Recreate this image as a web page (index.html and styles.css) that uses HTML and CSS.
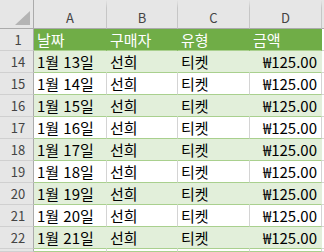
FILE: index.html
```html
<!DOCTYPE html>
<html lang="ko">
<head>
<meta charset="utf-8">
<link rel="stylesheet" href="styles.css">
</head>
<body>
<div class="sheet">
  <div class="ch corner"><span class="tri"></span></div>
  <div class="ch">A</div>
  <div class="ch">B</div>
  <div class="ch">C</div>
  <div class="ch">D</div>
  <div class="ch rest"></div>

  <div class="rh">1</div>
  <div class="c hd">날짜</div>
  <div class="c hd">구매자</div>
  <div class="c hd">유형</div>
  <div class="c hd">금액</div>
  <div class="c out"></div>

  <div class="rh">14</div>
  <div class="c band">1월 13일</div><div class="c band">선희</div><div class="c band">티켓</div><div class="c band num">₩125.00</div><div class="c out"></div>
  <div class="rh">15</div>
  <div class="c">1월 14일</div><div class="c">선희</div><div class="c">티켓</div><div class="c num">₩125.00</div><div class="c out"></div>
  <div class="rh">16</div>
  <div class="c band">1월 15일</div><div class="c band">선희</div><div class="c band">티켓</div><div class="c band num">₩125.00</div><div class="c out"></div>
  <div class="rh">17</div>
  <div class="c">1월 16일</div><div class="c">선희</div><div class="c">티켓</div><div class="c num">₩125.00</div><div class="c out"></div>
  <div class="rh">18</div>
  <div class="c band">1월 17일</div><div class="c band">선희</div><div class="c band">티켓</div><div class="c band num">₩125.00</div><div class="c out"></div>
  <div class="rh">19</div>
  <div class="c">1월 18일</div><div class="c">선희</div><div class="c">티켓</div><div class="c num">₩125.00</div><div class="c out"></div>
  <div class="rh">20</div>
  <div class="c band">1월 19일</div><div class="c band">선희</div><div class="c band">티켓</div><div class="c band num">₩125.00</div><div class="c out"></div>
  <div class="rh">21</div>
  <div class="c">1월 20일</div><div class="c">선희</div><div class="c">티켓</div><div class="c num">₩125.00</div><div class="c out"></div>
  <div class="rh">22</div>
  <div class="c band">1월 21일</div><div class="c band">선희</div><div class="c band">티켓</div><div class="c band num">₩125.00</div><div class="c out"></div>
  <div class="rh"></div>
  <div class="c"></div><div class="c"></div><div class="c"></div><div class="c"></div><div class="c out"></div>
</div>
</body>
</html>
```

FILE: styles.css
```css
* { box-sizing: border-box; }
html, body { margin: 0; padding: 0; background: #ffffff; overflow: hidden; }
body { width: 324px; height: 252px; }
.sheet {
  width: 324px;
  height: 252px;
  overflow: hidden;
  display: grid;
  grid-template-columns: 34px 73px 71px 72px 72px 1fr;
  grid-template-rows: 29px repeat(10, 22px) 1fr;
  font-family: "Noto Sans CJK KR", "Noto Sans", sans-serif;
  font-size: 15px;
  color: #000;
}
.ch {
  background: #e6e6e6;
  border-bottom: 1px solid #ababab;
  border-right: 1px solid #c6c6c6;
  border-top: 8px solid #e6e6e6;
  display: flex;
  align-items: center;
  justify-content: center;
  font-size: 13px;
  color: #444;
  line-height: 1;
  padding-bottom: 2px;
}
.ch.corner {
  position: relative;
  border-top: 0;
  border-right: 1px solid #ababab;
}
.tri {
  position: absolute;
  right: 3px;
  bottom: 3px;
  width: 0;
  height: 0;
  border-left: 15px solid transparent;
  border-bottom: 14px solid #b4b4b4;
}
.ch.rest { border-right: 0; }
.rh {
  background: #e6e6e6;
  border-right: 1px solid #ababab;
  border-bottom: 1px solid #d0d0d0;
  display: flex;
  align-items: center;
  justify-content: center;
  font-size: 13px;
  color: #444;
  line-height: 1;
  padding-left: 3px;
  overflow: hidden;
}
.c {
  border-bottom: 1px solid #a9d08e;
  border-right: 1px solid #d4d4d4;
  display: flex;
  align-items: center;
  padding: 0 3px 1px 3px;
  white-space: nowrap;
  line-height: 1;
  overflow: hidden;
  min-width: 0;
}
.c.hd {
  background: #70ad47;
  color: #ffffff;
  border-right-color: #70ad47;
  border-bottom-color: #a9d08e;
}
.c.band {
  background: #e2efda;
  border-right-color: #e2efda;
}
.c.num { justify-content: flex-end; padding-right: 4px; }
.c.out { border-bottom-color: #d4d4d4; border-right: 0; padding: 0; }
```
